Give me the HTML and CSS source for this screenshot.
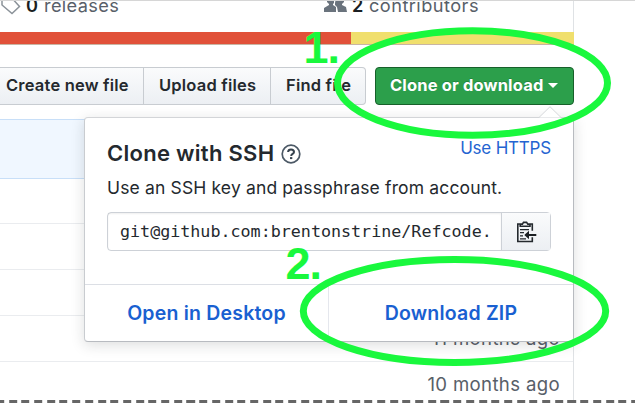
FILE: index.html
```html
<!DOCTYPE html>
<html lang="en">
<head>
<meta charset="utf-8">
<title>Clone or download</title>
<link rel="stylesheet" href="styles.css">
</head>
<body>
<main class="page">
  <div class="repo">
    <div class="stats">
      <div class="stat releases">
        <svg width="22" height="20" viewBox="0 0 22 20"><path d="M2 3v4l10 8.5 7.5-7L10-2H5z" fill="none" stroke="#8b9299" stroke-width="1.5"/></svg>
        <b>0</b><span class="releases-label">releases</span>
      </div>
      <div class="stat contributors">
        <svg width="23" height="20" viewBox="0 0 23 20"><path d="M3 0h7v5l-1 1v1l3 2v5H0v-4l5-3V6L3 4zM12 0h8v4l-2 2v1l4 2 1 5h-9l-1-5-2-2V5z" fill="#6a737d"/></svg>
        <b>2</b><span class="contributors-label">contributors</span>
      </div>
    </div>
    <div class="languages"><i class="lang-red"></i><i class="lang-yellow"></i></div>
    <div class="actions">
      <div class="button-group">
        <div class="button create"><span>Create new file</span></div>
        <div class="button upload"><span>Upload files</span></div>
        <div class="button find"><span>Find file</span></div>
      </div>
      <div class="clone-button"><span>Clone or download</span><i class="caret"></i></div>
    </div>
    <div class="files">
      <div class="commit"></div>
      <div class="row row-first"></div>
      <div class="row"></div>
      <div class="row"></div>
      <div class="row row-age"><span class="age eleven">11 months ago</span></div>
      <div class="row row-last"><span class="age">10 months ago</span></div>
    </div>
  </div>
  <div class="bottom-rule"></div>

  <section class="popover">
    <svg class="pointer" width="22" height="12" viewBox="0 0 22 12"><path d="M0 11.5 11 .7l11 10.8" fill="#fff" stroke="#d5d7da"/></svg>
    <div class="popover-body">
      <header class="heading">
        <h1>Clone with SSH</h1>
        <svg class="help" width="20" height="20" viewBox="0 0 20 20"><circle cx="10" cy="10" r="8.8" fill="none" stroke="#4c5966" stroke-width="1.7"/><path d="M7.1 8c.1-1.6 1.2-2.5 2.9-2.5 1.8 0 3 1 3 2.5 0 2-2.8 1.8-2.8 3.9" fill="none" stroke="#36424e" stroke-width="2"/><path d="M9 13.1h2.3v2H9z" fill="#36424e"/></svg>
        <a class="https">Use HTTPS</a>
      </header>
      <p>Use an SSH key and passphrase from account.</p>
      <div class="clone-url">
        <div class="url"><span>git@github.com:brentonstrine/Refcode.</span></div>
        <div class="copy">
          <svg width="21" height="22" viewBox="0 0 21 22"><path d="M4.5 3H1.8v17.5h14.5v-4.2M13.5 3h2.8v6.7M4.2 5.2V3.1h2.2L7.5 1.4h3.1l1.2 1.7H14v2.1z" fill="none" stroke="#24292e" stroke-width="1.6"/><path d="M4 8.7h9M4 11.7h4M4 14.8h3M4 17.8h6" stroke="#24292e" stroke-width="1.3"/><path d="M20.3 14h-9" stroke="#1b1f23" stroke-width="2"/><path d="m13 9.8-4.7 4.2 4.7 4.2z" fill="#1b1f23"/></svg>
        </div>
      </div>
    </div>
    <footer>
      <a class="desktop"><span>Open in Desktop</span></a>
      <a class="zip"><span>Download ZIP</span></a>
    </footer>
  </section>

  <svg class="annotations" width="635" height="403" viewBox="0 0 635 403">
    <g fill="none" stroke="#19f83d" stroke-width="7"><ellipse cx="472.5" cy="83" rx="135" ry="52.2"/><ellipse cx="454.5" cy="311" rx="151.2" ry="51.5"/></g>
    <g class="step"><text x="303.5" y="63">1.</text><text x="285.5" y="279">2.</text></g>
  </svg>
</main>
</body>
</html>
```
FILE: styles.css
```css
* { box-sizing: border-box; }
body { margin: 0; background: #fff; font-family: Inter, "Liberation Sans", sans-serif; color: #24292e; }
svg { display: block; flex: none; }
span, a, b, h1, p { white-space: nowrap; }

.page { position: relative; width: 635px; height: 403px; overflow: hidden; border-top: 1px solid #d6d6d6; }
.repo { width: 574px; height: 399px; overflow: hidden; }

.stats { display: flex; height: 31px; border-right: 1px solid #dfe2e5; }
.stat { display: flex; height: 20px; font-size: 18.2px; line-height: 20px; color: #586069; margin-top: -6px; }
.stat svg { margin-top: 3px; }
.stat b { color: #1b1f23; font-weight: 600; }
.releases { width: 324px; }
.releases b { margin-left: 4px; width: 18px; }
.releases-label { letter-spacing: .35px; }
.contributors b { margin-left: 5px; width: 17px; }
.contributors-label { letter-spacing: .45px; }

.languages { display: flex; height: 13px; border-bottom: 1px solid #c9b5a3; }
.lang-red { width: 351px; background: #e15139; }
.lang-yellow { flex: 1; background: #f0df6d; }

.actions { display: flex; justify-content: space-between; height: 38px; margin-top: 22px; }
.button-group { display: flex; width: 366px; border: 1px solid #c8ccd1; border-left: 0; border-radius: 0 4px 4px 0; background: linear-gradient(#fafbfc, #eceff3); }
.button { display: flex; align-items: center; border-right: 1px solid #c8ccd1; padding-bottom: 2px; font-size: 16.5px; font-weight: 600; letter-spacing: .2px; }
.button:last-child { border-right: 0; }
.create { width: 144px; padding-left: 6px; }
.upload { width: 127px; padding-left: 15px; }
.find { padding-left: 15px; }
.clone-button { display: flex; align-items: center; width: 199px; padding: 0 0 2px 14px; border: 1px solid #17602a; border-radius: 4px; background: #2c9f4b; color: #fff; font-size: 16.5px; font-weight: 700; letter-spacing: .15px; text-shadow: 0 -1px 0 #238640; }
.caret { border: 5px solid transparent; border-top-color: #fff; border-bottom: 0; margin-left: 5px; }

.files { margin-top: 14px; border-right: 1px solid #dfe2e5; }
.commit { height: 60px; width: 574px; background: #f0f7ff; border: 1px solid #c8dff8; border-left: 0; }
.row { height: 46px; border-bottom: 1px solid #eaecef; display: flex; justify-content: flex-end; align-items: center; padding: 0 13px 2px 0; color: #586069; font-size: 18.6px; letter-spacing: .35px; }
.row-first { height: 45px; }
.row-last { border: 0; }

.bottom-rule { height: 3px; background: repeating-linear-gradient(90deg, #666 0 8px, #fff 8px 12.7px) -3.8px 0; }

.popover { position: absolute; left: 84px; top: 116px; width: 490px; height: 225px; border: 1px solid #cfd2d6; border-color: #d3d5d8 #b8bbc0 #b8bbc0 #c9ccd0; border-radius: 4px; background: #fff; box-shadow: 0 3px 14px rgba(27,31,35,.15); }
.pointer { position: absolute; left: 454px; top: -12px; }
.popover-body { height: 166px; padding: 21px 22px 0; }
.heading { display: flex; height: 28px; }
h1 { margin: 0; width: 174px; font-size: 22px; line-height: 28px; font-weight: 600; letter-spacing: .28px; }
.help { margin-top: 5px; }
.https { margin-left: auto; font-size: 17px; line-height: 18px; color: #2464d1; letter-spacing: -.2px; }
p { margin: 10px 0 0; font-size: 17.5px; line-height: 22px; letter-spacing: .15px; }
.clone-url { display: flex; height: 39px; margin-top: 13px; border: 1px solid #cdd1d7; border-radius: 4px; }
.url { display: flex; align-items: center; width: 393px; padding: 0 0 2px 12px; font-family: "DejaVu Sans Mono", monospace; font-size: 16.7px; box-shadow: inset 0 1px 2px rgba(27,31,35,.07); }
.copy { display: flex; flex: 1; justify-content: center; align-items: center; border-left: 1px solid #cdd1d7; background: linear-gradient(#fafbfc, #eceff3); }
footer { display: flex; height: 57px; border-top: 1px solid #dcdfe5; }
footer a { display: flex; justify-content: center; align-items: center; color: #1960d1; font-size: 19.5px; font-weight: 600; letter-spacing: .2px; }
.desktop { width: 244px; border-right: 1px solid #e5e7ed; }
.zip { flex: 1; }

.annotations { position: absolute; left: 0; top: -1px; }
.step { fill: #19f83d; font: 700 45px "Liberation Sans", Arial, sans-serif; letter-spacing: -1px; }
```
